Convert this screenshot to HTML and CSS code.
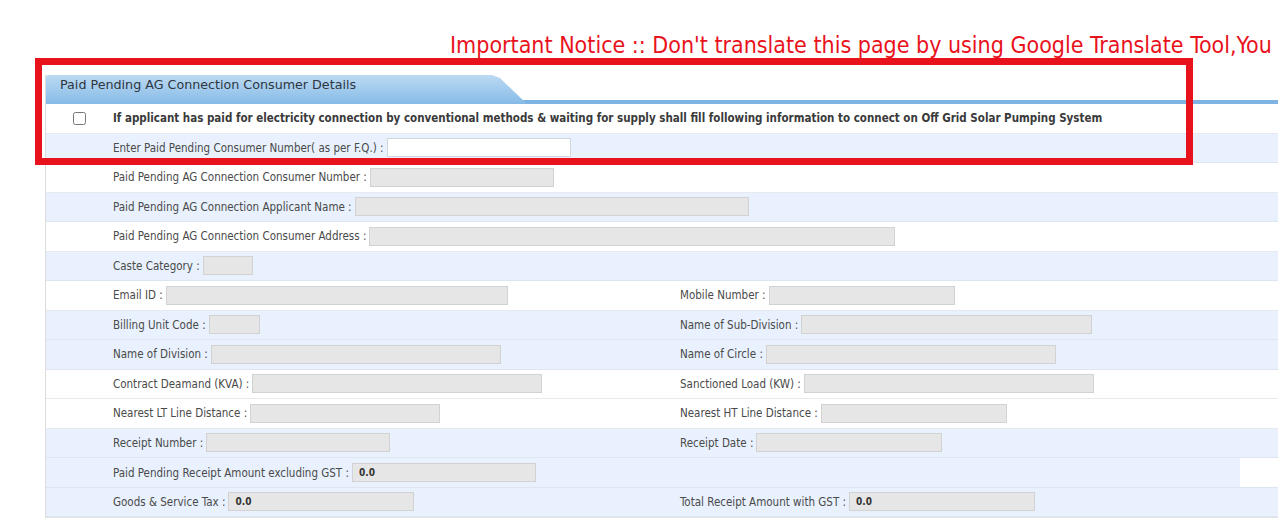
FILE: index.html
```html
<!DOCTYPE html>
<html lang="en">
<head>
    <meta charset="UTF-8">
    <meta name="viewport" content="width=device-width, initial-scale=1.0">
    <title>Paid Pending AG Connection</title>
    <link rel="stylesheet" href="styles.css">
</head>
<body>
    <div class="notice">Important Notice :: Don't translate this page by using Google Translate Tool,You</div>

    <div class="panel">
        <div class="panel-head">
            <div class="tab">Paid Pending AG Connection Consumer Details</div>
        </div>

        <div class="row check-row">
            <span class="check-cell"><input type="checkbox" id="paidPending"></span>
            <label for="paidPending" class="lead">If applicant has paid for electricity connection by conventional methods &amp; waiting for supply shall fill following information to connect on Off Grid Solar Pumping System</label>
        </div>

        <div class="row blue">
            <div class="col">Enter Paid Pending Consumer Number( as per F.Q.) : <input type="text" class="field open w184"></div>
            <div class="col"></div>
        </div>

        <div class="row">
            <div class="col">Paid Pending AG Connection Consumer Number : <input type="text" class="field w184" disabled></div>
            <div class="col"></div>
        </div>

        <div class="row blue">
            <div class="col wide">Paid Pending AG Connection Applicant Name : <input type="text" class="field w394" disabled></div>
        </div>

        <div class="row">
            <div class="col wide">Paid Pending AG Connection Consumer Address : <input type="text" class="field w526" disabled></div>
        </div>

        <div class="row blue">
            <div class="col">Caste Category : <input type="text" class="field w50" disabled></div>
            <div class="col"></div>
        </div>

        <div class="row">
            <div class="col">Email ID : <input type="text" class="field w342" disabled></div>
            <div class="col">Mobile Number : <input type="text" class="field w186" disabled></div>
        </div>

        <div class="row blue">
            <div class="col">Billing Unit Code : <input type="text" class="field w51" disabled></div>
            <div class="col">Name of Sub-Division : <input type="text" class="field w291" disabled></div>
        </div>

        <div class="row blue">
            <div class="col">Name of Division : <input type="text" class="field w290" disabled></div>
            <div class="col">Name of Circle : <input type="text" class="field w290" disabled></div>
        </div>

        <div class="row">
            <div class="col">Contract Deamand (KVA) : <input type="text" class="field w290" disabled></div>
            <div class="col">Sanctioned Load (KW) : <input type="text" class="field w290" disabled></div>
        </div>

        <div class="row">
            <div class="col">Nearest LT Line Distance : <input type="text" class="field w190" disabled></div>
            <div class="col">Nearest HT Line Distance : <input type="text" class="field w186" disabled></div>
        </div>

        <div class="row blue">
            <div class="col">Receipt Number : <input type="text" class="field w184" disabled></div>
            <div class="col">Receipt Date : <input type="text" class="field w186" disabled></div>
        </div>

        <div class="row blue">
            <div class="col">Paid Pending Receipt Amount excluding GST : <input type="text" class="field w184" value="0.0" disabled></div>
            <div class="col"><span class="blank"></span></div>
        </div>

        <div class="row blue">
            <div class="col">Goods &amp; Service Tax : <input type="text" class="field w186" value="0.0" disabled></div>
            <div class="col">Total Receipt Amount with GST : <input type="text" class="field w186" value="0.0" disabled></div>
        </div>
    </div>

    <div class="mark"></div>
</body>
</html>
```

FILE: styles.css
```css
body {
    margin: 0;
    background-color: #fff;
    font-family: 'DejaVu Sans Condensed', 'DejaVu Sans', sans-serif;
    color: #4a4a4a;
    overflow: hidden;
}

.notice {
    padding: 31px 0 0 450px;
    height: 75px;
    box-sizing: border-box;
    white-space: nowrap;
    overflow: hidden;
    color: #e8121c;
    font-size: 23px;
    line-height: 28px;
}

.panel {
    margin-left: 45px;
    width: 1233px;
    border-left: 1px solid #dcdcdc;
    border-bottom: 1px solid #e2e2e2;
    box-sizing: border-box;
}

.panel-head {
    height: 29px;
    background: linear-gradient(to bottom, transparent 25px, #7db4e3 25px);
}

.tab {
    width: 481px;
    height: 29px;
    box-sizing: border-box;
    padding: 2px 0 0 14px;
    font-family: 'DejaVu Sans', sans-serif;
    font-size: 12.7px;
    line-height: 16px;
    color: #2e3640;
    background: linear-gradient(to bottom, #bcdaf3, #86bbe7);
    clip-path: polygon(0 0, 446px 0, 454px 3px, 481px 100%, 0 100%);
    border-top-left-radius: 2px;
}

.row {
    height: 29.5px;
    box-sizing: border-box;
    border-bottom: 1px solid #e6e9ee;
    display: grid;
    grid-template-columns: 567px 1fr;
    align-items: center;
    padding-left: 67px;
    font-size: 11.5px;
    background-color: #fff;
}

.row.blue {
    background-color: #e8f1fd;
    border-bottom-color: #dde6f0;
}

.check-row {
    display: flex;
    padding-left: 0;
}

.check-cell {
    width: 67px;
    display: flex;
    justify-content: center;
}

.check-cell input {
    margin: 0;
    width: 13px;
    height: 13px;
}

.lead {
    font-weight: bold;
    color: #3a3a3a;
    font-size: 11.5px;
    white-space: nowrap;
}

.col {
    display: flex;
    align-items: center;
    white-space: nowrap;
    gap: 3px;
}

.col.wide {
    grid-column: span 2;
}

.field {
    height: 19px;
    box-sizing: border-box;
    flex-shrink: 0;
    border: 1px solid #d2d2d2;
    background-color: #e6e6e6;
    margin: 0;
    padding: 0 0 0 6px;
    font-family: 'DejaVu Sans Condensed', sans-serif;
    font-size: 10px;
    font-weight: bold;
    color: #333;
}

.field.open {
    background-color: #fff;
    border-color: #cfd6de;
}

.w50 { width: 50px; }
.w51 { width: 51px; }
.w184 { width: 184px; }
.w186 { width: 186px; }
.w190 { width: 190px; }
.w290 { width: 290px; }
.w291 { width: 291px; }
.w342 { width: 342px; }
.w394 { width: 394px; }
.w526 { width: 526px; }

.blank {
    margin-left: auto;
    width: 38px;
    height: 29px;
    background-color: #fff;
}

.mark {
    position: absolute;
    left: 35px;
    top: 58px;
    width: 1158px;
    height: 107px;
    box-sizing: border-box;
    border: 7px solid #e8121c;
}
```
